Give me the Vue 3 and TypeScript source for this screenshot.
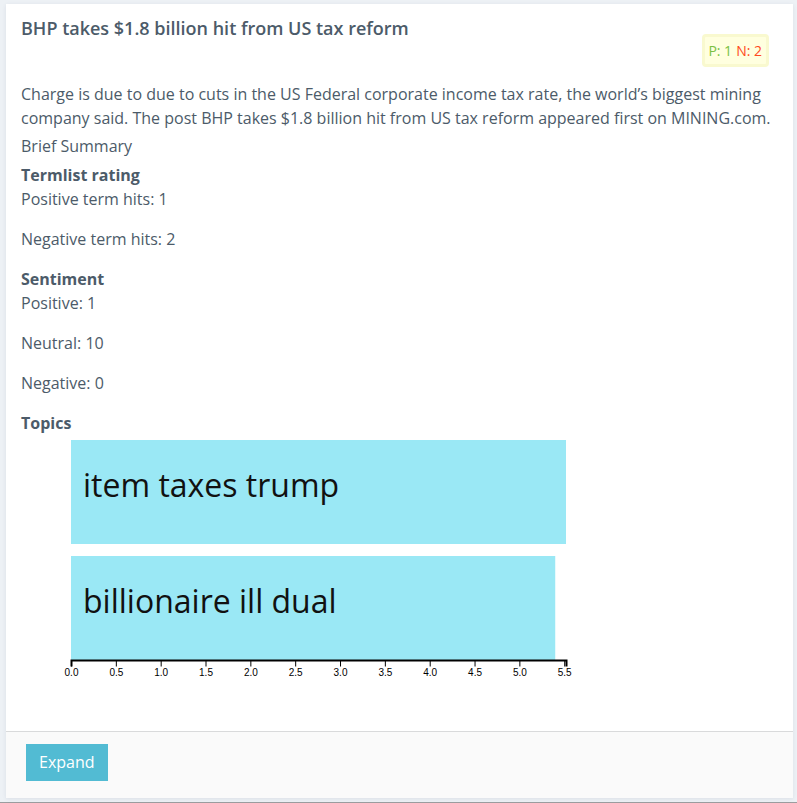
<script setup lang="ts">
interface Topic {
  label: string
  value: number
}

const termHits = { positive: 1, negative: 2 }
const sentiment = { positive: 1, neutral: 10, negative: 0 }

const topics: Topic[] = [
  { label: 'item taxes trump', value: 5.52 },
  { label: 'billionaire ill dual', value: 5.4 },
]

const plotWidth = 495
const plotHeight = 220
const barHeight = 104
const barStep = 116
const maxValue = 5.52

// Axis strokes are centred on pixels so that thin lines stay crisp.
const axisOffset = 0.5

const scale = (value: number): number => (value / maxValue) * plotWidth
const ticks: number[] = Array.from({ length: 12 }, (_, i) => i * 0.5)
</script>

<template>
  <main class="page">
    <article class="card">
      <div class="body">
        <header class="head">
          <h1 class="title">BHP takes $1.8 billion hit from US tax reform</h1>
          <div class="badge">
            <span class="pos">P: {{ termHits.positive }}</span>
            <span class="neg">N: {{ termHits.negative }}</span>
          </div>
        </header>

        <p class="summary">
          Charge is due to due to cuts in the US Federal corporate income tax rate, the world’s biggest mining
          company said. The post BHP takes $1.8 billion hit from US tax reform appeared first on MINING.com.
        </p>
        <p class="caption">Brief Summary</p>

        <section>
          <h2 class="heading">Termlist rating</h2>
          <p class="stat">Positive term hits: {{ termHits.positive }}</p>
          <p class="stat">Negative term hits: {{ termHits.negative }}</p>
        </section>

        <section>
          <h2 class="heading">Sentiment</h2>
          <p class="stat">Positive: {{ sentiment.positive }}</p>
          <p class="stat">Neutral: {{ sentiment.neutral }}</p>
          <p class="stat">Negative: {{ sentiment.negative }}</p>
        </section>

        <section>
          <h2 class="heading">Topics</h2>
          <svg class="chart" width="595" height="296" viewBox="-50 -5 595 296" role="img" aria-label="Topics">
            <g v-for="(topic, i) in topics" :key="topic.label">
              <rect class="bar" x="0" :y="i * barStep" :width="scale(topic.value)" :height="barHeight" />
              <text class="bar-label" x="12" :y="i * barStep + 57">{{ topic.label }}</text>
            </g>
            <g :transform="`translate(${axisOffset}, ${plotHeight + axisOffset})`">
              <path class="axis" :d="`M0,6V0H${plotWidth}V6`" />
              <g v-for="tick in ticks" :key="tick">
                <line class="tick" :x1="scale(tick)" :x2="scale(tick)" y1="0" y2="6" />
                <text class="tick-label" :x="scale(tick)" y="15">{{ tick.toFixed(1) }}</text>
              </g>
            </g>
          </svg>
        </section>
      </div>

      <footer class="foot">
        <button type="button" class="expand">Expand</button>
      </footer>
    </article>
  </main>
</template>

<style>
body {
  margin: 0;
  background: #edf1f5;
}
</style>

<style scoped>
.page {
  padding: 4px 4px 4px 6px;
  border-bottom: 1px solid #9b9d9f;
  font-family: 'Open Sans', sans-serif;
  font-size: 16px;
  line-height: 24px;
  color: #4c5b69;
}

.card {
  background: #fff;
  box-shadow: 0 1px 4px rgba(60, 80, 110, 0.1);
}

.body {
  padding: 12px 15px 0;
}

.head {
  display: flex;
  justify-content: space-between;
  min-height: 66px;
}

.title {
  margin: 0;
  font-size: 18px;
  font-weight: 600;
  line-height: 24px;
}

.badge {
  display: flex;
  gap: 4px;
  box-sizing: border-box;
  height: 33px;
  margin: 18px 9px 0 0;
  padding: 0 4px 0 3px;
  border: 3px solid #f9f9cf;
  border-radius: 4px;
  background: #ffffdf;
  font-size: 14px;
  line-height: 27px;
  white-space: nowrap;
}

.pos {
  color: #7ac143;
}

.neg {
  color: #ff4a20;
}

.summary {
  margin: 0 0 4px;
}

.caption {
  margin: 0 0 5px;
}

.heading {
  margin: 0;
  font-size: 16px;
  font-weight: 700;
  line-height: 24px;
}

.stat {
  margin: 0 0 16px;
}

.chart {
  display: block;
  max-width: 100%;
}

.bar {
  fill: #9ae8f5;
}

.bar-label {
  font-size: 32px;
  fill: #111;
}

.axis {
  fill: none;
  stroke: #000;
  stroke-width: 2px;
}

.tick {
  stroke: #000;
  stroke-width: 1px;
}

.tick-label {
  font-family: 'Liberation Sans', sans-serif;
  font-size: 10px;
  text-anchor: middle;
  fill: #000;
}

.foot {
  padding: 12px 20px 17px;
  border-top: 1px solid #d9dadb;
  background: #fafafa;
}

.expand {
  display: block;
  padding: 6px 13px 7px;
  border: 0;
  background: #52bbd3;
  color: #fff;
  font-family: inherit;
  font-size: 16px;
  line-height: 24px;
}
</style>
